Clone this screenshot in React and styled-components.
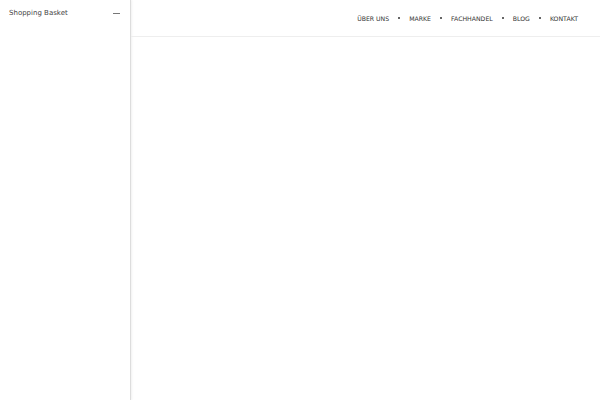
import React from 'react';
import styled, { createGlobalStyle } from 'styled-components';

const Global = createGlobalStyle`
  html, body { margin: 0; height: 100%; background: #fff; }
  #root { height: 100%; }
  body { font-family: "DejaVu Sans", sans-serif; color: #333; }
`;

const Layout = styled.div`
  display: flex;
  height: 400px;
`;

const Sidebar = styled.aside`
  width: 130px;
  flex-shrink: 0;
  border-right: 1px solid #ddd;
  box-shadow: 1px 0 2px rgba(0,0,0,0.06);
`;

const BasketHeader = styled.div`
  display: flex;
  justify-content: space-between;
  align-items: center;
  padding: 9px 9px 0 9px;
  font-size: 7px;
  color: #444;
`;

const Collapse = styled.span`
  width: 7px;
  height: 1px;
  background: #777;
  margin-right: 1px;
`;

const Main = styled.main`
  flex: 1;
`;

const TopBar = styled.header`
  height: 36px;
  border-bottom: 1px solid #eee;
  display: flex;
  justify-content: flex-end;
  align-items: center;
  padding-right: 22px;
`;

const NavItem = styled.a`
  font-size: 6.2px;
  color: #333;
  text-transform: uppercase;
  text-decoration: none;
`;

const Dot = styled.span`
  width: 2px;
  height: 2px;
  border-radius: 50%;
  background: #333;
  margin: 0 9px;
`;

const items = ['Über uns', 'Marke', 'Fachhandel', 'Blog', 'Kontakt'];

export default function App() {
  return (
    <>
      <Global />
      <Layout>
        <Sidebar>
          <BasketHeader>
            Shopping Basket
            <Collapse />
          </BasketHeader>
        </Sidebar>
        <Main>
          <TopBar>
            {items.map((it, i) => (
              <React.Fragment key={it}>
                {i > 0 && <Dot />}
                <NavItem href="#">{it}</NavItem>
              </React.Fragment>
            ))}
          </TopBar>
        </Main>
      </Layout>
    </>
  );
}
